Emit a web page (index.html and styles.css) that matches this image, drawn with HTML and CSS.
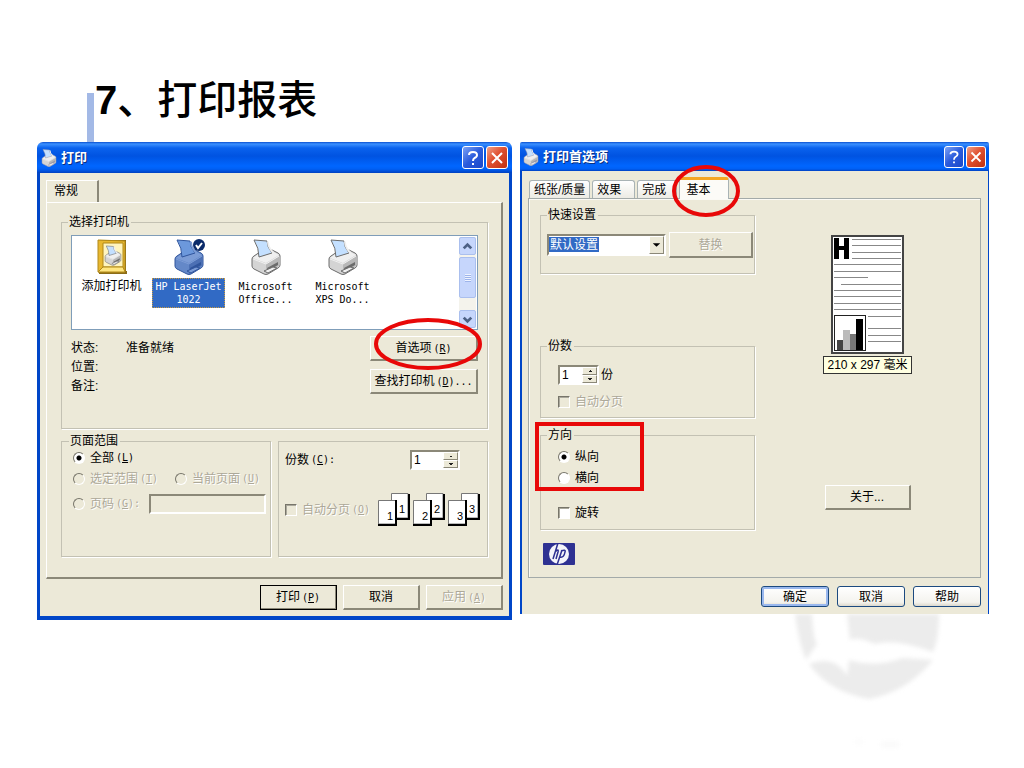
FILE: index.html
```html
<!DOCTYPE html>
<html lang="zh-CN">
<head>
  <meta charset="UTF-8" />
  <meta name="viewport" content="width=device-width, initial-scale=1.0"/>
  <title>打印报表</title>
  <link rel="stylesheet" href="styles.css">
</head>
<body>
  <!-- shared icons -->
  <svg class="defs" width="0" height="0" aria-hidden="true">
    <symbol id="printer" viewBox="0 0 32 36">
      <path d="M2 20 Q2 18 4 17 L10 13 Q12 12 14 12 L22 11 L28 14 Q30 15 30 17 V26 Q30 28 28 29 L18 35 Q16 36 14 35 L4 30 Q2 29 2 27Z" fill="var(--side)" stroke="var(--line)"/>
      <path d="M3 19 L11 13 L22 12 L29 16 L16 24Z" fill="var(--top)"/>
      <path d="M16 25 L30 17 V26 L16 35Z" fill="var(--front)"/>
      <path d="M4 1 L17 2 Q17 8 22 14 L9 18 Q9 9 4 1Z" fill="var(--sheet)" stroke="var(--line)"/>
      <path d="M17 2 L19 3 Q19 8 24 13 L22 14 Q17 8 17 2Z" fill="var(--top)"/>
      <path d="M3 20 L16 25 L29 17" fill="none" stroke="var(--top)"/>
      <path d="M17 29 L28 23 V26 L18 32Z" fill="var(--line)"/>
      <path d="M14 32 L23 28 L27 29 L18 34Z" fill="var(--top)" stroke="var(--line)"/>
    </symbol>
  </svg>

  <main class="slide">
    <header class="heading">
      <span class="bar"></span>
      <h1><b>7</b>、打印报表</h1>
    </header>

    <svg class="globe" viewBox="0 0 150 160" aria-hidden="true">
      <path d="M0 0 H17 Q18 25 22 30 L11 46 Q4 30 0 0Z M52 0 H144 Q144 25 138 38 Q100 24 80 30 Q62 22 55 26Z M14 50 Q40 40 52 62 L54 46 Q80 54 108 44 L138 46 Q112 78 74 85 Q34 78 14 50Z" fill="#ececec"/>
      <rect x="86" y="128" width="18" height="5" fill="#f9f9f9"/>
      <rect x="60" y="126" width="8" height="4" fill="#fbfbfb"/>
    </svg>

    <div class="windows">
      <section class="window print">
        <div class="titlebar">
          <svg class="title-icon" width="16" height="18"><use href="#printer"/></svg>
          <h2>打印</h2>
          <button class="caption help" type="button" aria-label="help"><svg viewBox="0 0 20 20"><path d="M6 7 Q6 4 10 4 Q14 4 14 7 Q14 9 11.500 10 Q10 11 10 13 M10 15 V17"/></svg></button>
          <button class="caption close" type="button" aria-label="close"><svg viewBox="0 0 20 20"><path d="M5 5 L15 15 M15 5 L5 15"/></svg></button>
        </div>
        <div class="window-body">
          <div class="tabs"><button class="tab" type="button">常规</button></div>
          <div class="panel">
            <fieldset class="choose">
              <legend>选择打印机</legend>
              <div class="listbox">
                <ul class="printers">
                  <li>
                    <svg width="32" height="36" viewBox="0 0 32 36">
                      <path d="M2 1 H30 V32 H31 V35 H3Z" fill="#8b6c18"/>
                      <path d="M2 1 L29 2 V33 H2Z" fill="#e8b830" stroke="#b08818"/>
                      <path d="M7 4 H27 V28 H7Z" fill="#fff5bf" stroke="#b08818"/>
                      <path d="M2 33 L7 28 H27 L29 33Z" fill="#ffe680" stroke="#b08818"/>
                      <use href="#printer" x="8" y="6" width="18" height="21"/>
                    </svg>
                    <span>添加打印机</span>
                  </li>
                  <li class="selected">
                    <svg width="32" height="36" viewBox="0 0 32 36">
                      <use href="#printer" width="32" height="36"/>
                      <circle cx="26" cy="6" r="6" fill="#0a2a6a"/>
                      <path d="M23 6 L25 9 L29 4" fill="none" stroke="#fff" stroke-width="2"/>
                    </svg>
                    <span class="latin">HP LaserJet<br>1022</span>
                  </li>
                  <li><svg width="32" height="36"><use href="#printer"/></svg><span class="latin">Microsoft<br>Office...</span></li>
                  <li><svg width="32" height="36"><use href="#printer"/></svg><span class="latin">Microsoft<br>XPS Do...</span></li>
                </ul>
                <div class="scrollbar">
                  <button type="button" aria-label="up"><svg viewBox="0 0 16 16"><path d="M4 10 L8 6 L12 10"/></svg></button>
                  <span class="thumb"></span>
                  <button type="button" aria-label="down"><svg viewBox="0 0 16 16"><path d="M4 6 L8 10 L12 6"/></svg></button>
                </div>
              </div>
              <div class="details">
                <dl>
                  <dt>状态:</dt><dd>准备就绪</dd>
                  <dt>位置:</dt><dd></dd>
                  <dt>备注:</dt><dd></dd>
                </dl>
                <div class="actions">
                  <div class="marked">
                    <button class="btn" type="button">首选项<span class="key">(<u>R</u>)</span></button>
                    <svg class="mark" width="110" height="54" viewBox="0 0 110 54"><ellipse cx="55" cy="27" rx="52" ry="24"/></svg>
                  </div>
                  <button class="btn" type="button">查找打印机<span class="key">(<u>D</u>)...</span></button>
                </div>
              </div>
            </fieldset>

            <div class="lower">
              <fieldset class="range">
                <legend>页面范围</legend>
                <div class="line">
                  <label><input type="radio" name="range" checked>全部<span class="key">(<u>L</u>)</span></label>
                </div>
                <div class="line">
                  <label class="off"><input type="radio" name="range" disabled>选定范围<span class="key">(<u>T</u>)</span></label>
                  <label class="off current"><input type="radio" name="range" disabled>当前页面<span class="key">(<u>U</u>)</span></label>
                </div>
                <div class="line">
                  <label class="off"><input type="radio" name="range" disabled>页码<span class="key">(<u>G</u>):</span></label>
                  <input class="pages" type="text" aria-label="页码" disabled>
                </div>
              </fieldset>
              <fieldset class="copies">
                <div class="line">
                  <label for="copies">份数<span class="key">(<u>C</u>):</span></label>
                  <span class="spinner wide"><input id="copies" type="number" value="1"><span class="steps"><button type="button" aria-label="more"></button><button type="button" aria-label="less"></button></span></span>
                </div>
                <div class="line">
                  <label class="off"><input type="checkbox" disabled>自动分页<span class="key">(<u>O</u>)</span></label>
                  <svg class="collate" width="102" height="34" viewBox="0 0 102 34">
                    <g id="pair">
                      <path d="M13.500 0.500 H30 V25 H13.500Z"/><path class="edge" d="M13 26 H31 V1"/>
                      <path d="M0.500 7.500 H18 V31 H0.500Z"/><path class="edge" d="M0 32 H18 V7"/>
                    </g>
                    <use href="#pair" x="35"/><use href="#pair" x="70"/>
                    <text x="9" y="27">1</text><text x="21" y="20">1</text>
                    <text x="44" y="27">2</text><text x="56" y="20">2</text>
                    <text x="79" y="27">3</text><text x="91" y="20">3</text>
                  </svg>
                </div>
              </fieldset>
            </div>
          </div>
          <div class="footer">
            <button class="btn default" type="button">打印<span class="key">(<u>P</u>)</span></button>
            <button class="btn" type="button">取消</button>
            <button class="btn" type="button" disabled>应用<span class="key">(<u>A</u>)</span></button>
          </div>
        </div>
      </section>

      <section class="window prefs">
        <div class="titlebar">
          <svg class="title-icon" width="16" height="18"><use href="#printer"/></svg>
          <h2>打印首选项</h2>
          <button class="caption help" type="button" aria-label="help"><svg viewBox="0 0 20 20"><path d="M6 7 Q6 4 10 4 Q14 4 14 7 Q14 9 11.500 10 Q10 11 10 13 M10 15 V17"/></svg></button>
          <button class="caption close" type="button" aria-label="close"><svg viewBox="0 0 20 20"><path d="M5 5 L15 15 M15 5 L5 15"/></svg></button>
        </div>
        <div class="window-body">
          <div class="tabs">
            <button class="tab" type="button">纸张/质量</button>
            <button class="tab" type="button">效果</button>
            <button class="tab" type="button">完成</button>
            <div class="marked">
              <button class="tab active" type="button">基本</button>
              <svg class="mark" width="68" height="54" viewBox="0 0 68 54"><ellipse cx="34" cy="27" rx="32" ry="24"/></svg>
            </div>
          </div>
          <div class="panel">
            <div class="groups">
              <fieldset class="quick">
                <legend>快速设置</legend>
                <span class="combo">
                  <select aria-label="快速设置"><option>默认设置</option></select>
                  <svg class="arrow" viewBox="0 0 14 16"><path d="M3 6 H11 L7 10Z"/></svg>
                </span>
                <button class="btn" type="button" disabled>替换</button>
              </fieldset>
              <fieldset class="count">
                <legend>份数</legend>
                <label class="line"><span class="spinner"><input type="number" value="1"><span class="steps"><button type="button" aria-label="more"></button><button type="button" aria-label="less"></button></span></span>份</label>
                <label class="line off"><input type="checkbox" disabled>自动分页</label>
              </fieldset>
              <fieldset class="orient">
                <legend>方向</legend>
                <label class="line"><input type="radio" name="orient" checked>纵向</label>
                <label class="line"><input type="radio" name="orient">横向</label>
                <label class="line rotate"><input type="checkbox">旋转</label>
                <span class="frame"></span>
              </fieldset>
              <svg class="logo" width="32" height="22" viewBox="0 0 32 22">
                <rect width="32" height="22" rx="1" fill="#2e3192"/>
                <ellipse cx="16" cy="11" rx="10" ry="10" fill="#f4f4fa"/>
                <path d="M15 0 L10 16 M12 9 Q16 5 15 9 L13 16 M19 7 L14 22 M18 8 Q23 6 22 9 Q21 15 17 14" fill="none" stroke="#2e3192" stroke-width="1.500"/>
              </svg>
            </div>
            <div class="preview">
              <svg width="73" height="119" viewBox="0 0 73 119">
                <rect x="1" y="1" width="71" height="117" fill="#fff" stroke="#444" stroke-width="2"/>
                <path d="M3 3 H8 V11 H13 V3 H18 V24 H13 V15 H8 V24 H3Z"/>
                <path d="M21 4.500H70 M21 10.500H70 M21 17.500H70 M21 23.500H70 M3 29.500H70 M3 36.500H70 M3 42.500H37 M10 49.500H70 M3 55.500H70 M3 61.500H70 M3 68.500H70 M3 74.500H70 M37 81.500H70 M37 93.500H70 M37 100.500H70 M37 106.500H70" stroke="#888"/>
                <rect x="3.500" y="80.500" width="31" height="35" fill="#fff" stroke="#222"/>
                <path d="M6 105h6v10h-6z" fill="#444"/><path d="M12 95h7v20h-7z" fill="#bbb"/><path d="M19 99h6v16h-6z" fill="#777"/><path d="M25 84h7v31h-7z"/>
              </svg>
              <span class="size">210 x 297 毫米</span>
              <button class="btn" type="button">关于...</button>
            </div>
          </div>
          <div class="footer">
            <button class="xp default" type="button">确定</button>
            <button class="xp" type="button">取消</button>
            <button class="xp" type="button">帮助</button>
          </div>
        </div>
      </section>
    </div>
  </main>
</body>
</html>
```

FILE: styles.css
```css
:root {
  --face: #ece9d8;
  --shadow: #8b8878;
  --group: #c3c1b3;
  --red: #e80808;
  --sheet: #c4e0ff;
  --top: #f0f0f0;
  --side: #d4d4d4;
  --front: #b8b8b8;
  --line: #6c6c6c;
}

* {
  box-sizing: border-box;
  margin: 0;
  padding: 0;
}

body {
  background: #fff;
  color: #000;
  font-family: "Liberation Sans", "Noto Sans CJK SC", sans-serif;
  font-size: 12px;
  line-height: 16px;
}

button, input, select {
  font: inherit;
  color: inherit;
}

svg {
  display: block;
}

.defs {
  position: absolute;
}

.slide {
  position: relative;
  min-height: 100vh;
  overflow: hidden;
}

.heading {
  display: flex;
  align-items: flex-end;
  gap: 1px;
  padding: 70px 0 0 87px;
}

.bar {
  width: 7px;
  height: 49px;
  background: #a3b9e6;
}

h1 {
  margin-bottom: 12px;
  font-size: 40px;
  font-weight: 500;
  line-height: 60px;
}

.globe {
  position: absolute;
  left: 795px;
  top: 614px;
  width: 150px;
  height: 160px;
  filter: blur(2px);
}

.windows {
  position: relative;
  display: grid;
  grid-template-columns: 475fr 469fr;
  gap: 8px;
  align-items: start;
  padding: 0 35px 0 37px;
}

/* window chrome */
.titlebar {
  display: flex;
  align-items: center;
  gap: 2px;
  height: 31px;
  padding: 0 4px;
  background: linear-gradient(#0a4fd0, #3b90ff 2px, #0a62ee 6px, #0053e1 14px, #0066ff 24px, #0060f5 27px, #0040c0);
  border-radius: 6px 6px 0 0;
}

.title-icon {
  --line: #99a;
}

.titlebar h2 {
  flex: 1;
  margin-left: 2px;
  color: #fff;
  font-size: 13px;
  text-shadow: 1px 1px #0a3080;
}

.caption {
  width: 22px;
  height: 23px;
  border: 1px solid #fff;
  border-radius: 3px;
  background: linear-gradient(135deg, #7ba2f5, #2a5bdc 50%, #1c48c8);
}

.caption.close {
  background: linear-gradient(135deg, #f0a088, #e05030 45%, #c03010);
}

.caption path {
  fill: none;
  stroke: #fff;
  stroke-width: 2;
}

.window-body {
  padding: 7px 6px 6px;
  border: solid #0046c8;
  border-width: 0 3px 4px;
  background: var(--face);
}

.tabs {
  display: flex;
}

.tab {
  height: 22px;
  border: 0;
  background: var(--face);
}

.print .tab {
  width: 53px;
  padding: 0 12px 2px 0;
  border: solid #fff;
  border-width: 1px 2px 0 1px;
  border-right-color: var(--shadow);
}

.print .panel {
  padding: 11px 13px 20px 14px;
  border: solid #fff;
  border-width: 1px 2px 2px 1px;
  border-right-color: var(--shadow);
  border-bottom-color: var(--shadow);
}

fieldset {
  min-width: 0;
  border: 1px solid var(--group);
  box-shadow: 1px 1px #fff;
}

legend {
  padding: 0 2px 0 1px;
}

.key {
  padding-left: 2px;
  font-family: "DejaVu Sans Mono", monospace;
  font-size: 10px;
}

.btn {
  height: 25px;
  border: solid #fff;
  border-width: 1px 2px 2px 1px;
  border-right-color: var(--shadow);
  border-bottom-color: var(--shadow);
  background: var(--face);
  white-space: nowrap;
}

.off, .btn:disabled {
  color: #aca899;
  text-shadow: 1px 1px #fff;
}

.marked {
  position: relative;
  display: grid;
}

.mark {
  position: absolute;
  z-index: 2;
  pointer-events: none;
}

.mark ellipse {
  fill: none;
  stroke: var(--red);
  stroke-width: 4;
}

/* printer list */
.choose {
  padding: 5px 9px 33px;
}

.choose legend {
  margin-left: -3px;
}

.listbox {
  display: flex;
  justify-content: space-between;
  height: 95px;
  padding: 1px;
  border: 1px solid #7f9db9;
  background: #fff;
}

.printers {
  display: flex;
  list-style: none;
}

.printers li {
  display: flex;
  flex-direction: column;
  align-items: center;
  gap: 3px;
  width: 77px;
  padding-top: 2px;
  white-space: nowrap;
}

.latin {
  padding: 2px 3px;
  font-family: "DejaVu Sans Mono", monospace;
  font-size: 10px;
  line-height: 13px;
}

.selected {
  --sheet: #6c98dc;
  --top: #7c9cd6;
  --side: #6488c8;
  --front: #4c70b4;
  --line: #30559c;
}

.selected .latin {
  background: #316ac5;
  color: #fff;
  text-align: center;
  outline: 1px dotted #c89a40;
  outline-offset: -1px;
}

.scrollbar {
  display: flex;
  flex-direction: column;
  gap: 2px;
  width: 17px;
  background: #f4f3ec;
}

.scrollbar button, .thumb {
  height: 18px;
  border: 1px solid #aabfee;
  border-radius: 2px;
  background: #c6d6fc;
}

.scrollbar button:last-child {
  margin-top: auto;
}

.scrollbar path {
  fill: none;
  stroke: #4d6185;
  stroke-width: 3;
}

.thumb {
  height: 41px;
  background: repeating-linear-gradient(#eef3ff 0 1px, #9db4ea 1px 2px) center / 6px 8px no-repeat, #c6d6fc;
}

.details {
  display: flex;
  justify-content: space-between;
  padding-top: 6px;
}

.details dl {
  display: grid;
  grid-template-columns: 55px auto;
  grid-auto-rows: 19px;
  align-items: center;
  padding-top: 2px;
}

.actions {
  display: grid;
  gap: 8px;
  align-content: start;
  width: 108px;
}

.actions .mark {
  left: 3px;
  top: -19px;
}

/* page range and copies */
.lower {
  display: grid;
  grid-template-columns: 1fr 1fr;
  gap: 7px;
  padding-top: 4px;
}

.line {
  display: flex;
  align-items: center;
}

label {
  display: flex;
  align-items: center;
  white-space: nowrap;
}

input[type="radio"], input[type="checkbox"] {
  appearance: none;
  width: 12px;
  height: 12px;
  margin-right: 5px;
  border: 1px solid;
  border-color: #77756a #fff #fff #77756a;
  background: #fff;
}

input[type="radio"] {
  border-radius: 50%;
}

input[type="radio"]:checked {
  background: radial-gradient(circle, #000 2px, #fff 3px);
}

input[type="checkbox"] {
  box-shadow: inset 1px 1px #aaa89c;
}

input:disabled {
  background: var(--face);
}

.range {
  padding: 0 4px 40px 11px;
}

.range legend {
  margin-left: -4px;
}

.range .line {
  justify-content: space-between;
  height: 25px;
}

.range legend + .line {
  height: 17px;
}

.range .current {
  padding-right: 6px;
}

.pages {
  width: 117px;
  height: 20px;
  border: 2px solid;
  border-color: var(--shadow) #fff #fff var(--shadow);
}

.copies {
  margin-top: 8px;
  padding: 8px 7px 20px 6px;
}

.copies .line {
  justify-content: space-between;
}

.copies .line + .line {
  padding-top: 23px;
}

.copies .wide {
  width: 50px;
  margin-right: 20px;
}

.spinner {
  display: flex;
  width: 41px;
  height: 20px;
  border: 2px solid;
  border-color: var(--shadow) #fff #fff var(--shadow);
  background: #fff;
}

.spinner input {
  flex: 1;
  width: 0;
  padding-left: 2px;
  border: 0;
  outline: 0;
  background: none;
  appearance: textfield;
}

.spinner input::-webkit-inner-spin-button {
  display: none;
}

.steps {
  display: grid;
  width: 15px;
}

.steps button {
  border: 1px solid;
  border-color: #fff var(--shadow) var(--shadow) #fff;
}

.steps button:first-child {
  background: conic-gradient(from 135deg at 50% 0, #222 90deg, transparent 0) center / 4px 2px no-repeat, var(--face);
}

.steps button:last-child {
  background: conic-gradient(from -45deg at 50% 100%, #222 90deg, transparent 0) center / 4px 2px no-repeat, var(--face);
}

.collate {
  fill: #fff;
  stroke: #777;
}

.collate .edge {
  fill: none;
  stroke: #000;
  stroke-width: 2;
}

.collate text {
  fill: #000;
  stroke: none;
  font-size: 11px;
}

.footer {
  display: flex;
  justify-content: flex-end;
  gap: 6px;
  padding-top: 6px;
}

.footer .btn {
  width: 77px;
}

.btn.default {
  outline: 1px solid #000;
  outline-offset: -1px;
}

/* preferences window */
.prefs .titlebar {
  height: 29px;
  border-radius: 2px 2px 0 0;
  padding: 0 3px;
}

.prefs .caption {
  width: 20px;
  height: 22px;
}

.prefs .window-body {
  padding: 6px 7px 7px 6px;
  border-width: 0 1px 0 2px;
}

.prefs .tabs {
  align-items: flex-end;
  gap: 2px;
  padding-left: 1px;
}

.prefs .tab {
  height: 18px;
  padding: 0 4px;
  border: 1px solid #a9b3b5;
  border-bottom: 0;
  border-radius: 3px 3px 0 0;
  background: linear-gradient(#fff, #ecebe4);
}

.prefs .tab:nth-child(2) {
  padding-right: 13px;
}

.prefs .tab:nth-child(3) {
  padding-right: 10px;
}

.prefs .tab.active {
  height: 22px;
  width: 50px;
  margin-bottom: -1px;
  padding: 0 18px 0 6px;
  border-top: 3px solid #f5a623;
  background: #fcfbf7;
}

.tabs .mark {
  left: -7px;
  top: -13px;
}

.prefs .panel {
  display: grid;
  grid-template-columns: 215px 1fr;
  padding: 8px 0 12px 11px;
  border: 1px solid #a3aaa9;
  box-shadow: inset 1px 1px #fbfaf5;
}

.quick {
  display: flex;
  justify-content: space-between;
  align-items: center;
  padding: 9px 1px 15px 6px;
}

.quick .btn {
  width: 84px;
  height: 26px;
}

.combo {
  position: relative;
  width: 119px;
  height: 22px;
  border: 2px solid;
  border-color: var(--shadow) #fff #fff var(--shadow);
}

.combo select {
  appearance: none;
  width: 100%;
  height: 18px;
  padding-left: 1px;
  border: 0;
  background: linear-gradient(#316ac5, #316ac5) 0 1px / 50px 15px no-repeat, #fff;
  color: #fff;
}

.arrow {
  position: absolute;
  right: 0;
  top: 0;
  width: 15px;
  height: 18px;
  border: 1px solid;
  border-color: #fff var(--shadow) var(--shadow) #fff;
  background: var(--face);
  pointer-events: none;
}

.count legend, .orient legend {
  margin-left: -11px;
}

.count {
  margin-top: 64px;
  padding: 11px 0 6px 17px;
}

.count .spinner {
  margin-right: 2px;
}

.count .off {
  height: 18px;
  margin-top: 8px;
}

.orient {
  position: relative;
  margin-top: 9px;
  padding: 3px 0 6px 17px;
}

.orient .line {
  height: 21px;
}

.orient .rotate {
  margin-top: 14px;
}

.frame {
  position: absolute;
  left: -6px;
  top: -21px;
  width: 109px;
  height: 69px;
  border: 4px solid var(--red);
  pointer-events: none;
}

.logo {
  margin: 13px 0 0 3px;
}

.preview {
  display: flex;
  flex-direction: column;
  align-items: center;
  padding-top: 28px;
}

.size {
  margin: 2px 0 111px;
  padding: 0 3px;
  border: 1px solid #333;
  background: #ffffe1;
  font-family: "Liberation Sans Narrow", "Liberation Sans", "Noto Sans CJK SC", sans-serif;
}

.preview .btn {
  width: 86px;
}

.prefs .footer {
  gap: 8px;
  padding-top: 8px;
}

.xp {
  width: 68px;
  height: 21px;
  border: 1px solid #1c4a80;
  border-radius: 3px;
  background: linear-gradient(#fff, #f4f3ee 80%, #dcd8cc);
}

.xp.default {
  box-shadow: inset 0 0 0 2px #9ab8ee;
}
```
